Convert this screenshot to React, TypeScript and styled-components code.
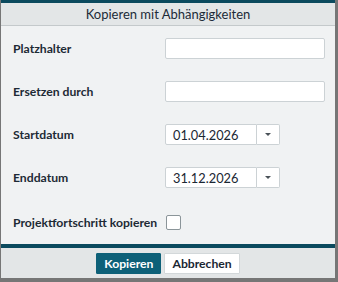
import React from "react";
import styled, { createGlobalStyle } from "styled-components";

const Global = createGlobalStyle`
  html, body { margin: 0; padding: 0; background: #767676; }
  body { font-family: Lato, "Open Sans", sans-serif; }
  * { box-sizing: border-box; }
`;

const Dialog = styled.div`
  width: 334px;
  height: 278px;
  margin-left: 1px;
  display: flex;
  flex-direction: column;
  background: #f0f2f3;
`;

const TopBar = styled.div`
  height: 3px;
  background: #0b4a5e;
`;

const Header = styled.div`
  height: 23px;
  background: #e3e6e7;
  border-bottom: 1px solid #c4c9cb;
  display: flex;
  align-items: center;
  justify-content: center;
  font-size: 13px;
  color: #1c2b38;
`;

const Content = styled.div`
  flex: 1;
  padding: 12px 10px 0 12px;
  display: flex;
  flex-direction: column;
  gap: 22px;
`;

const Row = styled.div<{ $shift?: number }>`
  height: 21px;
  display: grid;
  grid-template-columns: 152px 1fr;
  align-items: center;
  margin-top: ${(p) => p.$shift ?? 0}px;
`;

const Label = styled.label`
  font-size: 12.2px;
  font-weight: 700;
  color: #1d2a35;
  white-space: nowrap;
`;

const TextInput = styled.div`
  width: 160px;
  height: 21px;
  background: #fff;
  border: 1px solid #ccd2d5;
  border-radius: 2px;
`;

const DateBox = styled.div`
  display: flex;
  height: 21px;
`;

const DateInput = styled.div`
  width: 92px;
  height: 100%;
  background: #fff;
  border: 1px solid #ccd2d5;
  border-radius: 2px 0 0 2px;
  display: flex;
  align-items: center;
  padding-left: 7px;
  font-size: 12.8px;
  color: #1b2733;
`;

const DropButton = styled.div`
  width: 23px;
  height: 100%;
  background: #fff;
  border: 1px solid #ccd2d5;
  border-left: none;
  border-radius: 0 2px 2px 0;
  display: flex;
  align-items: center;
  justify-content: center;
`;

const Arrow = styled.span`
  width: 0;
  height: 0;
  border-left: 3px solid transparent;
  border-right: 3px solid transparent;
  border-top: 3px solid #4a5258;
`;

const Check = styled.div`
  width: 15px;
  height: 15px;
  margin-left: 1px;
  background: #fff;
  border: 1px solid #8b9599;
  border-radius: 2px;
`;

const FooterLine = styled.div`
  height: 4px;
  background: #0b4a5e;
`;

const Footer = styled.div`
  height: 30px;
  background: #e3e6e7;
  display: flex;
  align-items: center;
  justify-content: center;
  gap: 3px;
`;

const Button = styled.button<{ $primary?: boolean }>`
  height: 21px;
  padding: 0 7px;
  font-family: inherit;
  font-size: 12.2px;
  font-weight: 700;
  color: ${(p) => (p.$primary ? "#ffffff" : "#1b2733")};
  background: ${(p) => (p.$primary ? "#0d6078" : "#ffffff")};
  border: 1px solid ${(p) => (p.$primary ? "#0d6078" : "#d3d8da")};
  border-radius: 1px;
  cursor: pointer;
`;

const DateField = ({ value }: { value: string }) => (
  <DateBox>
    <DateInput>{value}</DateInput>
    <DropButton>
      <Arrow />
    </DropButton>
  </DateBox>
);

export default function App() {
  return (
    <>
      <Global />
      <Dialog>
        <TopBar />
        <Header>Kopieren mit Abhängigkeiten</Header>
        <Content>
          <Row>
            <Label>Platzhalter</Label>
            <TextInput />
          </Row>
          <Row>
            <Label>Ersetzen durch</Label>
            <TextInput />
          </Row>
          <Row>
            <Label>Startdatum</Label>
            <DateField value="01.04.2026" />
          </Row>
          <Row>
            <Label>Enddatum</Label>
            <DateField value="31.12.2026" />
          </Row>
          <Row $shift={2}>
            <Label>Projektfortschritt kopieren</Label>
            <Check />
          </Row>
        </Content>
        <FooterLine />
        <Footer>
          <Button $primary>Kopieren</Button>
          <Button>Abbrechen</Button>
        </Footer>
      </Dialog>
    </>
  );
}
